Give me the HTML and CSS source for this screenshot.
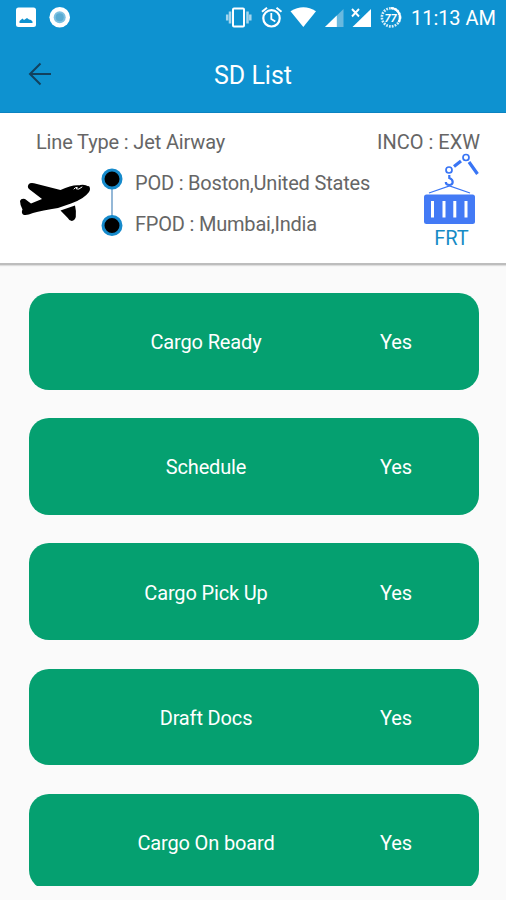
FILE: index.html
```html
<!DOCTYPE html>
<html lang="en">
<head>
<meta charset="utf-8">
<title>SD List</title>
<link rel="stylesheet" href="styles.css">
</head>
<body>
<header class="top">
  <div class="status">
    <svg class="notices" width="58" height="24" viewBox="14 5 58 24">
      <rect x="16" y="7.500" width="20" height="19.500" rx="2.500" fill="#fff"/>
      <path d="M19.500 23v-2l3-2.500 1.500 1.500 3-2 2 1.500 2 .5 1.500 1.500V23z" fill="#0e92d0"/>
      <circle cx="59.700" cy="17.200" r="10.300" fill="#fff"/>
      <circle cx="59.700" cy="17.200" r="6" fill="#7cc0e1"/>
      <circle cx="59.700" cy="17.200" r="4" fill="#5aabd2"/>
    </svg>
    <svg class="icons" width="180" height="28" viewBox="224 4 180 28">
      <g fill="none" stroke="#fff">
        <rect x="233" y="8.500" width="11" height="18" rx="1" stroke-width="2"/>
        <g stroke="#a4d5ed" stroke-width="2.500"><path d="M230 11.500v12M247.500 11.500v12"/><path d="M227.200 14.500v6M250.300 14.500v6"/></g>
        <circle cx="271.500" cy="18.300" r="8.200" stroke-width="2.200"/>
        <path d="M271.300 13v6l4 2.500" stroke-width="1.800"/>
        <path d="M262 11.700l5-4M276.500 7.700l5 4" stroke-width="2"/>
        <path d="M352 9l7 7.500M359 9l-7 7.500" stroke-width="1.900"/>
        <circle cx="391" cy="17.300" r="9.100" stroke-width="2.600" stroke-dasharray="1.800 1.100" stroke="#d9eff9"/>
        <path d="M391 8.200a9.100 9.100 0 0 1 7.500 14" stroke-width="2.200"/>
      </g>
      <path d="M290.500 11.300q13-8 25.500 0L303.300 27z" fill="#fff"/>
      <path d="M343.500 9v18H325z" fill="#69b9df"/>
      <path d="M336.800 15.500V27H325z" fill="#fff"/>
      <path d="M371 9v18h-18.500z" fill="#fff"/>
      <text class="battery" x="390.500" y="21.500" text-anchor="middle">77</text>
    </svg>
    <time class="clock">11:13 AM</time>
  </div>
  <div class="bar">
    <svg class="back" width="24" height="24" viewBox="0 0 24 24"><path d="M12.500 1.500L2 12l10.500 10.500M2 12h21" fill="none" stroke="#12415e" stroke-width="2"/></svg>
    <h1 class="title">SD List</h1>
  </div>
</header>
<section class="summary">
  <div class="heading"><span class="line-type">Line Type : Jet Airway</span><span class="inco">INCO : EXW</span></div>
  <div class="route">
    <svg class="plane" width="72" height="42" viewBox="19 181 72 42">
      <path d="M20 201Q21 198 25 199L31 203.500 42 199 29 189Q27 187 28.500 184.500 30 182.500 34 183.300L60.500 190Q72 184.500 79 185.300L84 188 89 186Q91 189 89 192 84 199 71 203.500L58 208Q42 210.500 33 213 26 216 23 214.500 21 212.500 22.500 209.500 20 205 20 201z"/>
      <path d="M75 189.500L80 185Q85 184 88.500 186.500L85 189 78 190z"/>
      <path d="M73.800 189.300q1-2 3.500-2l-1 1.500 2.500.3 3.500-2.300" fill="none" stroke="#fff" stroke-width="1"/>
      <path d="M60.500 210.500L75 205.500q1.500 6 .8 11.500-1 3.500-4 4-2.500 0-4-3z"/>
    </svg>
    <svg class="stops" width="22" height="70" viewBox="0 0 22 70">
      <path d="M11 12v46" stroke="#82acd0" stroke-width="1.700"/>
      <g stroke="#168acb" stroke-width="3"><circle cx="11" cy="12" r="9"/><circle cx="11" cy="58.500" r="9"/></g>
    </svg>
    <div class="ports"><span class="pod">POD : Boston,United States</span><span class="fpod">FPOD : Mumbai,India</span></div>
    <div class="freight">
      <svg width="58" height="74" viewBox="422 151 58 74">
        <g fill="none" stroke="#3975f5">
          <circle cx="466" cy="157.500" r="3" stroke-width="1.700"/><circle cx="449" cy="170" r="3" stroke-width="1.700"/>
          <path d="M454 166.500l7-5.500M469 162l8.500 12" stroke-width="3.200"/>
          <path d="M449.300 175v3c5 2 4 7 0 7-2.500 0-3.500-1.500-3.500-3" stroke-width="2.200"/>
          <path d="M429 193l20.500-7 20.500 7" stroke-width="1.300"/>
        </g>
        <rect x="424" y="194.500" width="51" height="29.500" rx="2.500" fill="#437af5"/>
        <path d="M432.500 201v16.500M444 201v16.500M454.800 201v16.500M466 201v16.500" stroke="#fff" stroke-width="3"/>
      </svg>
      <span class="mode">FRT</span>
    </div>
  </div>
</section>
<main class="list">
  <article class="card"><span class="step">Cargo Ready</span><span class="state">Yes</span></article>
  <article class="card"><span class="step">Schedule</span><span class="state">Yes</span></article>
  <article class="card"><span class="step">Cargo Pick Up</span><span class="state">Yes</span></article>
  <article class="card"><span class="step">Draft Docs</span><span class="state">Yes</span></article>
  <article class="card"><span class="step">Cargo On board</span><span class="state">Yes</span></article>
</main>
</body>
</html>
```
FILE: styles.css
```css
* { box-sizing: border-box; }
body {
  margin: 0;
  height: 900px;
  overflow: hidden;
  background: #fafafa;
  font-family: Roboto, "Liberation Sans", sans-serif;
  font-size: 20px;
}
svg { display: block; flex: none; }
.top { height: 113px; background: #0e92d0; border-bottom: 1px solid #0b83c1; color: #fff; }
.status { height: 37px; display: flex; align-items: flex-start; padding-left: 14px; }
.notices { margin-top: 5px; }
.icons { margin: 4px 0 0 152px; }
.battery { font: italic bold 11px Roboto, sans-serif; fill: #fff; }
.clock { margin: 5px 0 0 7px; line-height: 26px; font-size: 20px; letter-spacing: -0.05px; white-space: nowrap; }
.bar { height: 75px; display: grid; grid-template-columns: 100px 1fr 100px; align-items: center; }
.back { margin: -2px 0 0 28px; }
.title { margin: 2px 0 0; text-align: center; font-size: 25px; font-weight: 400; line-height: 30px; }
.summary {
  height: 152px;
  padding-top: 16px;
  background: #fff;
  border-bottom: 2px solid #bdbdbd;
  box-shadow: 0 1px 1px #ddd;
  color: #666;
}
.heading { display: flex; justify-content: space-between; padding: 1px 26px 0 36px; line-height: 24px; }
.line-type { letter-spacing: -0.15px; }
.route { display: flex; }
.plane { margin: 27px 0 0 19px; }
.stops { margin: 13px 0 0 10px; }
.ports { display: flex; flex-direction: column; gap: 16px; margin: 17px 0 0 12px; width: 287px; line-height: 25px; letter-spacing: -0.2px; }
.ports span, .heading span { width: max-content; }
.freight { width: 58px; margin-top: -3px; }
.mode { display: block; margin-top: 1px; padding-left: 1px; text-align: center; line-height: 25px; color: #168bc5; }
.list { height: 621px; padding: 28px 27.500px 0 28.500px; display: flex; flex-direction: column; gap: 28.600px; overflow: hidden; }
.card {
  flex: none;
  height: 96.600px;
  border-radius: 20px;
  display: grid;
  grid-template-columns: 230px 150px;
  padding: 2px 0 0 62.500px;
  align-items: center;
  text-align: center;
  letter-spacing: -0.15px;
  background: #05a070;
  color: #fff;
}
```
